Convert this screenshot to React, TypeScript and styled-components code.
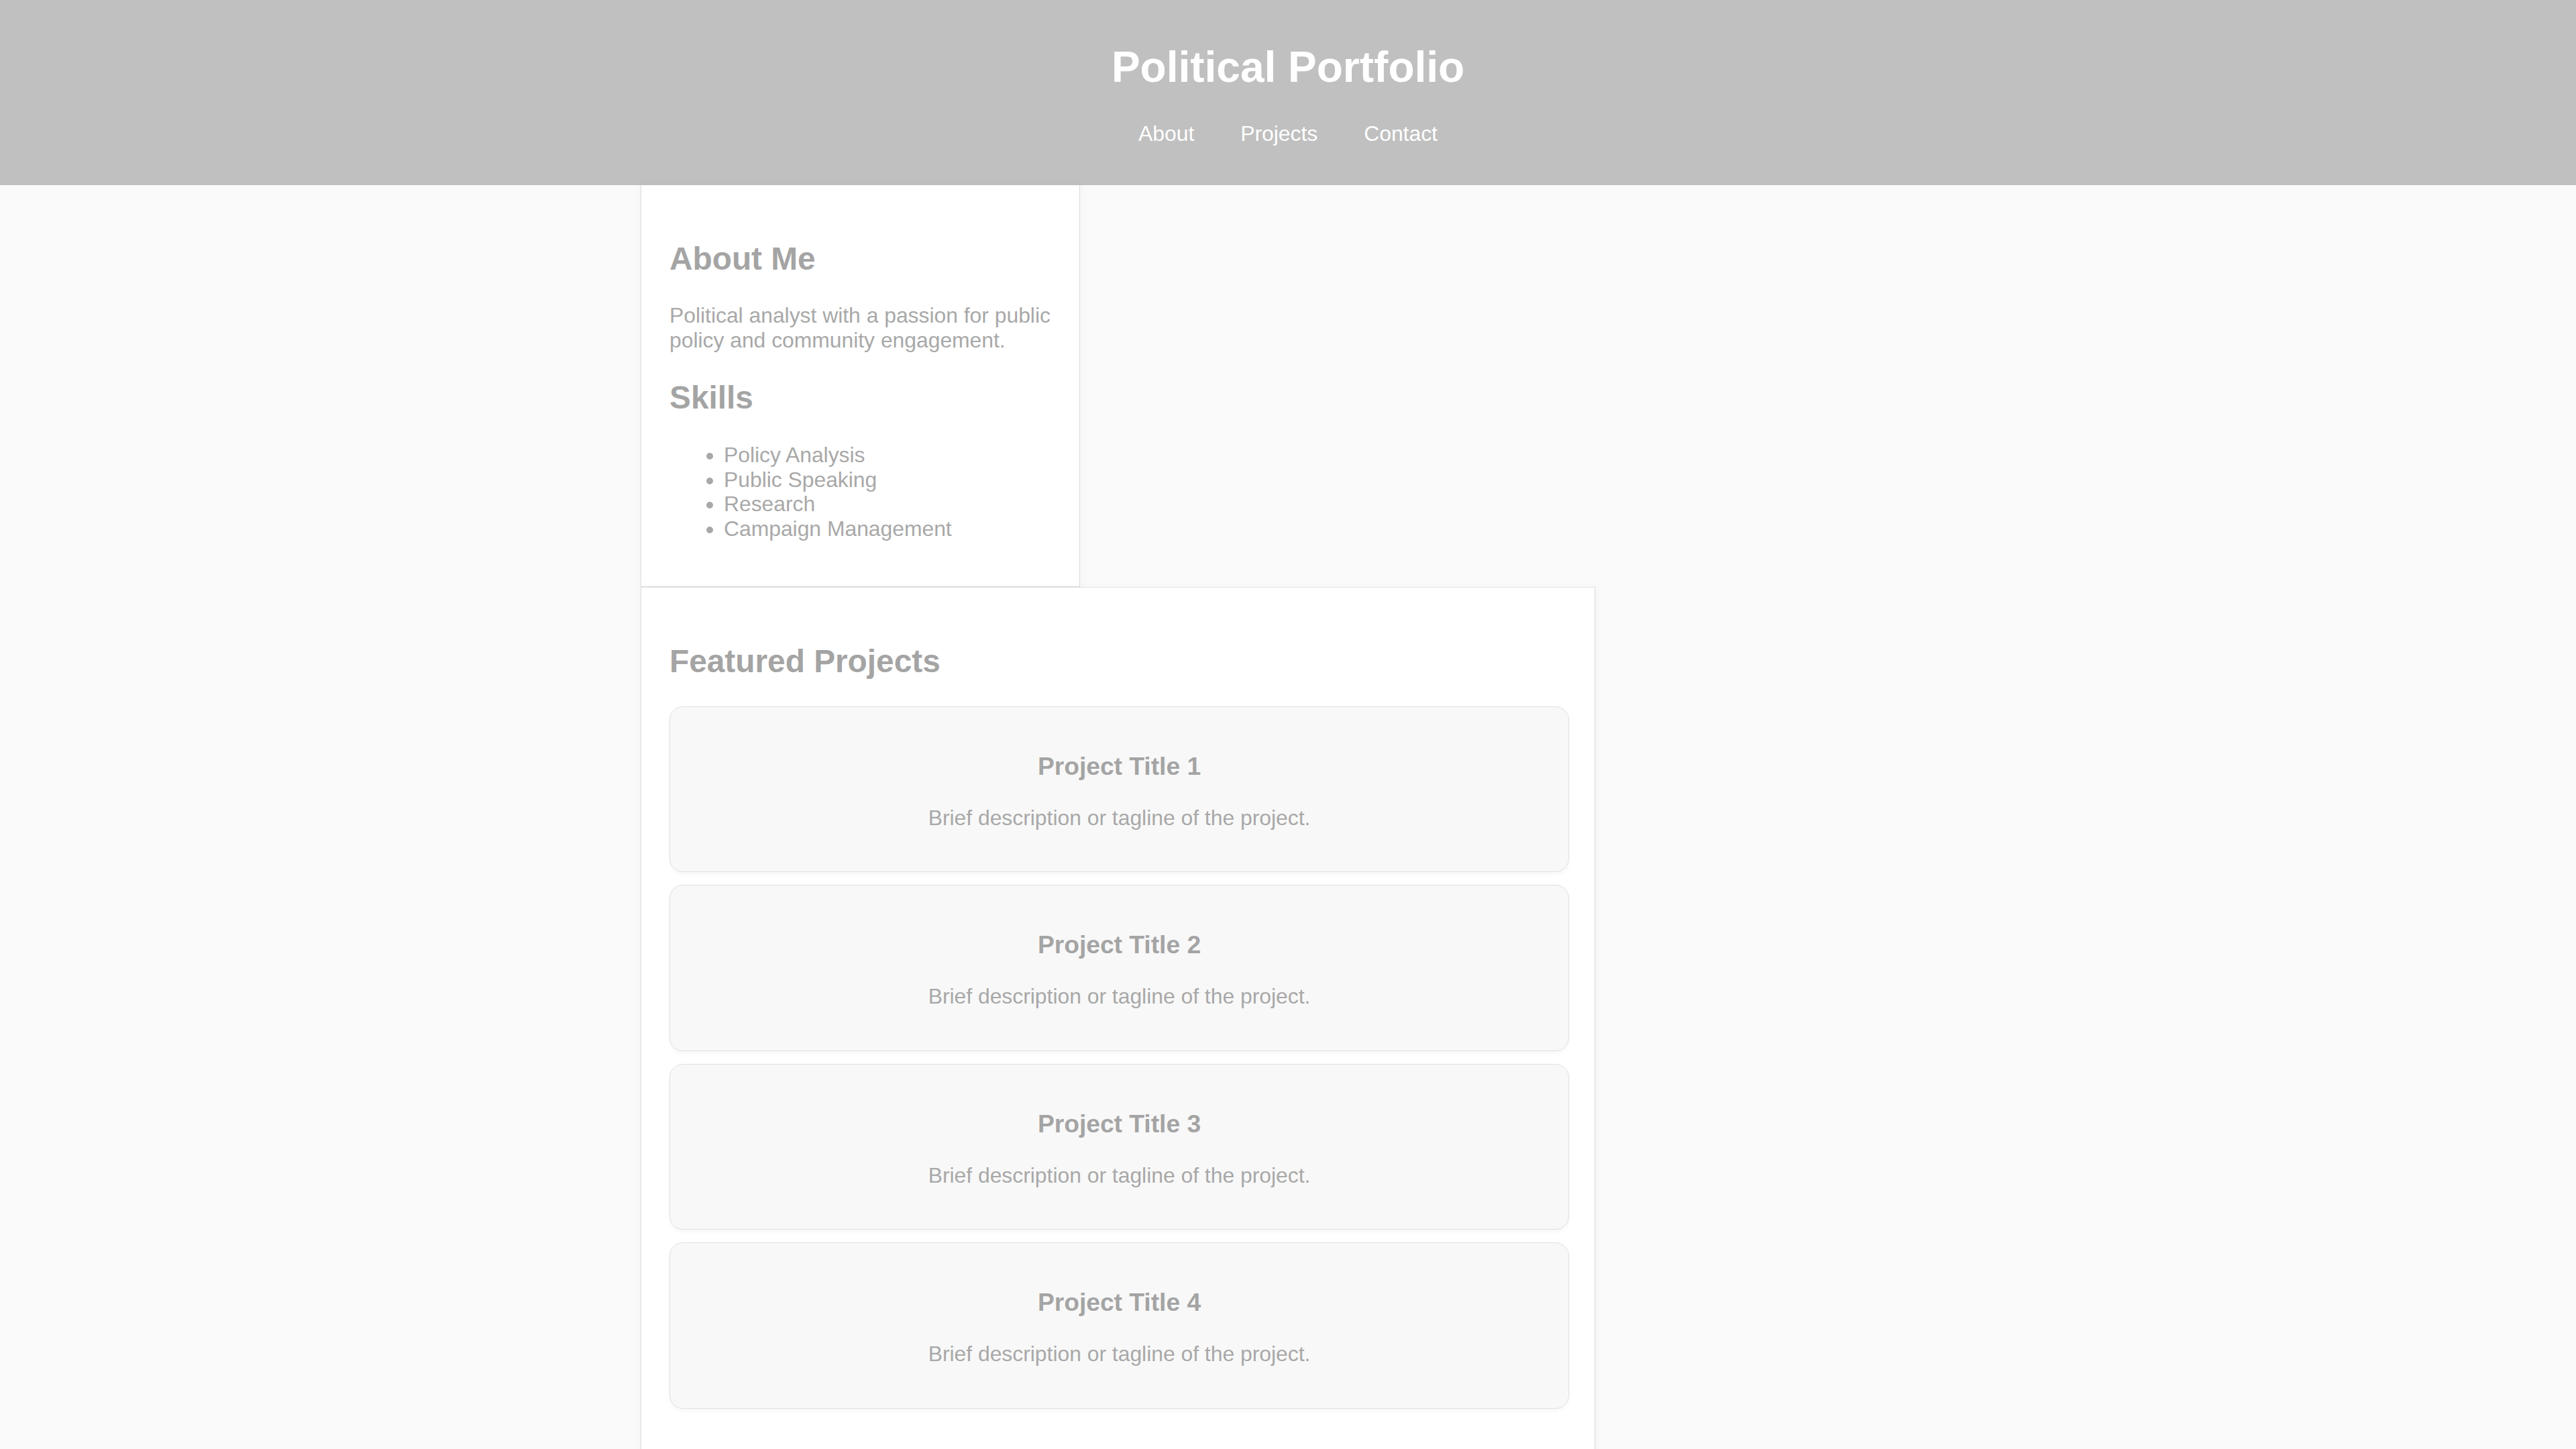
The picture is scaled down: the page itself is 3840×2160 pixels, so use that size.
import React from 'react';
import styled, { createGlobalStyle } from 'styled-components';

const GlobalStyle = createGlobalStyle`
    body {
        margin: 0;
        background: #fafafa;
        font-family: "Liberation Sans", Arial, sans-serif;
        font-size: 31.84px;
        color: #a8a8a8;
    }
`;

const skills = ['Policy Analysis', 'Public Speaking', 'Research', 'Campaign Management'];

const projects = [
    { id: 1, title: 'Project Title 1', text: 'Brief description or tagline of the project.' },
    { id: 2, title: 'Project Title 2', text: 'Brief description or tagline of the project.' },
    { id: 3, title: 'Project Title 3', text: 'Brief description or tagline of the project.' },
    { id: 4, title: 'Project Title 4', text: 'Brief description or tagline of the project.' },
];

export default function App() {
    return (
        <>
            <GlobalStyle />
            <Header>
                <h1>Political Portfolio</h1>
                <Nav>
                    <a href="#about">About</a>
                    <a href="#projects">Projects</a>
                    <a href="#contact">Contact</a>
                </Nav>
            </Header>
            <Main>
                <Section id="about" $pr={36} $pb={36}>
                    <h2>About Me</h2>
                    <p>Political analyst with a passion for public policy and community engagement.</p>
                    <h2>Skills</h2>
                    <SkillList>
                        {skills.map(s => <li key={s}>{s}</li>)}
                    </SkillList>
                </Section>
                <Section id="projects" $wide $pb={80}>
                    <h2>Featured Projects</h2>
                    <CardList>
                        {projects.map(p => (
                            <Card key={p.id}>
                                <h3>{p.title}</h3>
                                <p>{p.text}</p>
                            </Card>
                        ))}
                    </CardList>
                </Section>
            </Main>
        </>
    );
}

const Header = styled.header`
    background: #c0c0c0;
    color: #fff;
    text-align: center;
    padding: 63px 0 58px;

    h1 {
        margin: 0;
        font-size: 64px;
        line-height: 74px;
        font-weight: bold;
    }
`;

const Nav = styled.nav`
    margin-top: 44px;
    display: flex;
    justify-content: center;
    gap: 69px;
    line-height: 37px;

    a {
        color: #fff;
        text-decoration: none;
        font-size: 31.84px;
    }
`;

const Main = styled.main`
    width: 1930px;
    margin: 0 auto;
    display: grid;
    grid-template-columns: 655px 768px 1fr;
    align-items: start;
`;

const Section = styled.section<{ $wide?: boolean; $pr?: number; $pb?: number }>`
    grid-column: ${p => (p.$wide ? '1 / 3' : '1 / 2')};
    background: #fff;
    border: 1px solid #dcdcdc;
    border-top: ${p => (p.$wide ? '1px solid #e2e2e2' : 'none')};
    box-shadow: 0 0 12px rgba(0, 0, 0, 0.04);
    padding: 42px ${p => p.$pr ?? 38}px ${p => p.$pb ?? 36}px 42px;

    h2 {
        font-size: 47.8px;
        margin: 39.7px 0;
        color: #a4a4a4;
    }

    p {
        margin: 31.84px 0;
        line-height: 36.6px;
    }
`;

const SkillList = styled.ul`
    margin: 31.84px 0;
    padding-left: 81px;
    line-height: 36.6px;
`;

const CardList = styled.div`
    display: flex;
    flex-direction: column;
    gap: 19px;
`;

const Card = styled.div`
    background: #f8f8f8;
    border: 1px solid #e0e0e0;
    border-radius: 20px;
    box-shadow: 0 4px 6px rgba(0, 0, 0, 0.03);
    padding: 30px;
    text-align: center;

    h3 {
        font-size: 37.2px;
        margin: 37.2px 0;
        line-height: 42.8px;
        color: #a4a4a4;
    }

    p {
        margin: 31.84px 0;
    }
`;
